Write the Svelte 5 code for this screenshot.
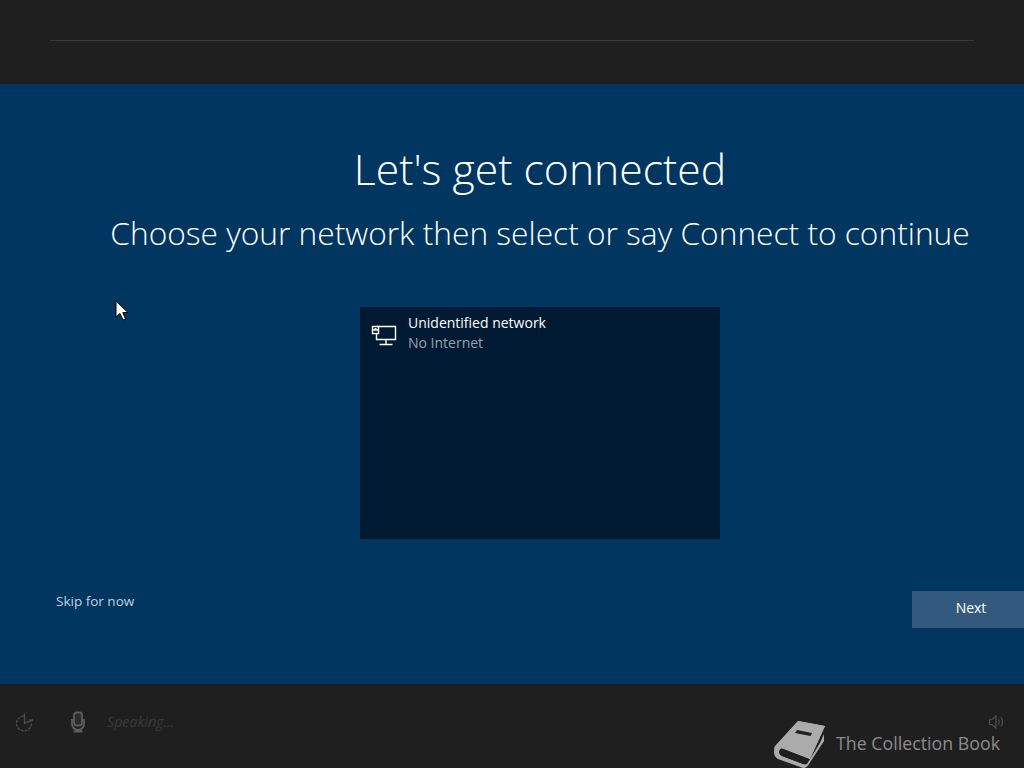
<script>
	let networks = [{ name: 'Unidentified network', status: 'No Internet' }];
</script>

<div class="screen">
	<header class="top">
		<div class="progress"></div>
	</header>

	<main class="main">
		<h1>Let's get connected</h1>
		<h2>Choose your network then select or say Connect to continue</h2>

		<div class="list">
			{#each networks as net}
				<div class="net">
					<svg class="net-icon" viewBox="0 0 26 22" width="26" height="22" fill="none" stroke="#fff" stroke-width="1.4">
						<path d="M5.5 2.5H24.5V15.5H5.5V10" />
						<rect x="1.5" y="2.5" width="6" height="7" fill="#001a33" />
						<path d="M1.5 6H7.5M15 15.5V20M8.5 20.5H21.5" />
						<rect x="3.5" y="4" width="2" height="1.5" fill="#fff" stroke="none" />
					</svg>
					<div class="net-text">
						<div class="net-name">{net.name}</div>
						<div class="net-status">{net.status}</div>
					</div>
				</div>
			{/each}
		</div>

		<div class="actions">
			<span class="skip">Skip for now</span>
			<button class="next">Next</button>
		</div>

		<svg class="cursor" viewBox="0 0 14 22" width="14" height="22">
			<path d="M1 1V17L5 13.5L8 20L10.5 19L7.8 12.6H13Z" fill="#fff" stroke="#000" stroke-width="1" />
		</svg>
	</main>

	<footer class="bottom">
		<svg class="ic-ease" viewBox="0 0 20 20" width="20" height="20" fill="none" stroke="#4a4a4a" stroke-width="1.4">
			<path d="M9 4A7.500 7.500 0 1 0 16.500 11.500" stroke-dasharray="3 1" />
			<path d="M9.500 1.500V11.500L18 8" />
			<path d="M14 8H18" />
		</svg>
		<svg class="ic-mic" viewBox="0 0 16 22" width="16" height="22" fill="none" stroke="#5c5c5c" stroke-width="1.8">
			<rect x="4" y="1.5" width="8" height="13" rx="2.5" fill="#2c2c2c" />
			<path d="M2 8V13A5 5 0 0 0 14 13V8M8 18V20M3.500 20.500H12.500" />
		</svg>
		<span class="speaking">Speaking...</span>
		<div class="right">
			<svg class="ic-vol" viewBox="0 0 18 16" width="18" height="16" fill="none" stroke="#505050" stroke-width="1.2">
				<path d="M1.500 5.500H4L8 2V14L4 10.500H1.500Z" />
				<path d="M10.500 5.500Q12 8 10.500 10.500M13 3.500Q16 8 13 12.500" />
			</svg>
			<div class="brand">
				<svg class="book" viewBox="0 0 52 48" width="52" height="48">
					<path d="M24 0L51 5L36 38L7 27L0 27Z" fill="#ababab" />
					<path d="M24 0L1 25C-1 31 0 36 4 38L29 47C32 47 34 45 35 43L50 20L50 13L46 22L33 43C31 44 29 43 27 42L8 35C4 33 4 29 8 27L36 38L51 5Z" fill="#ababab" />
					<path d="M8 28L34 38L29 43L8 35C5 33 5 30 8 28Z" fill="#1f1f1f" />
					<path d="M23 9L38 12L36.500 15L21 12Z" fill="#1f1f1f" />
				</svg>
				<span class="brand-name">The Collection Book</span>
			</div>
		</div>
	</footer>
</div>

<style>
	:global(body) {
		margin: 0;
	}

	.screen {
		width: 1024px;
		height: 768px;
		display: flex;
		flex-direction: column;
		font-family: 'Open Sans', 'Noto Sans', sans-serif;
		overflow: hidden;
	}

	.top {
		height: 84px;
		background: #1f1f1f;
		padding: 40px 50px 0;
		box-sizing: border-box;
	}

	.progress {
		height: 1px;
		background: #3a3a3a;
	}

	.main {
		position: relative;
		height: 600px;
		background: #003660;
		padding: 58px 0 0 56px;
		box-sizing: border-box;
		display: flex;
		flex-direction: column;
		align-items: center;
		color: #fff;
	}

	h1 {
		margin: 0;
		font-size: 42.7px;
		font-weight: 300;
		line-height: 54px;
	}

	h2 {
		margin: 15px 0 0;
		font-size: 31.7px;
		font-weight: 300;
		line-height: 44px;
		white-space: nowrap;
	}

	.list {
		width: 360px;
		height: 232px;
		margin-top: 52px;
		background: #001a33;
	}

	.net {
		display: flex;
		align-items: flex-start;
		padding: 6px 0 0 11px;
	}

	.net-icon {
		margin-top: 11px;
	}

	.net-text {
		margin-left: 11px;
		font-size: 14px;
		line-height: 20px;
	}

	.net-status {
		color: #97a2ae;
	}

	.actions {
		align-self: stretch;
		display: flex;
		justify-content: space-between;
		align-items: flex-start;
		margin-top: 52px;
	}

	.skip {
		font-size: 13.5px;
		line-height: 20px;
		color: #c2d2e0;
	}

	.next {
		width: 112px;
		height: 37px;
		border: 0;
		padding: 0 0 4px 6px;
		background: #33597e;
		color: #fff;
		font: inherit;
		font-size: 14px;
	}

	.cursor {
		position: absolute;
		left: 115px;
		top: 216px;
	}

	.bottom {
		height: 84px;
		background: #1f1f1f;
		display: flex;
		align-items: flex-start;
		padding: 28px 0 0 15px;
		box-sizing: border-box;
		position: relative;
	}

	.ic-mic {
		margin: -1px 0 0 35px;
	}

	.speaking {
		margin-left: 21px;
		font-size: 14.2px;
		font-style: italic;
		line-height: 20px;
		color: #3a3a3a;
	}

	.right {
		margin-left: auto;
		padding-right: 18px;
		display: flex;
		flex-direction: column;
		align-items: flex-end;
	}

	.ic-vol {
		margin-top: 2px;
	}

	.brand {
		display: flex;
		align-items: flex-start;
		gap: 10px;
		margin: -12px 6px 0 0;
		font-size: 17.8px;
		color: #8c8c8c;
	}

	.book {
		margin-top: 3px;
	}

	.brand-name {
		margin-top: 13px;
	}
</style>
